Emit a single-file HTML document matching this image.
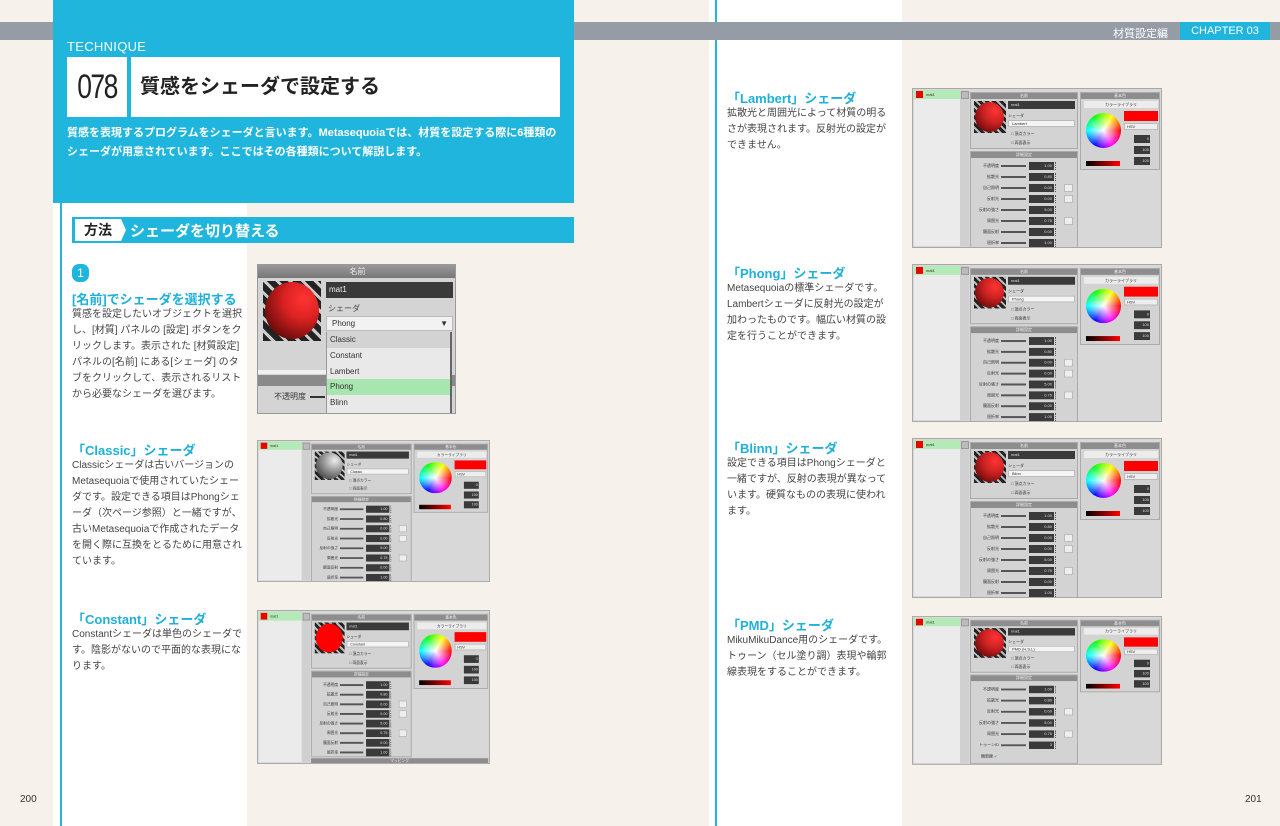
<!DOCTYPE html>
<html><head><meta charset="utf-8">
<style>
*{margin:0;padding:0;box-sizing:border-box}
body{width:1280px;height:826px;overflow:hidden;background:#f6f1eb;position:relative;font-family:"Liberation Sans","Noto Sans CJK JP",sans-serif;color:#333}
.a{position:absolute}
.band{left:0;top:22px;width:1280px;height:18px;background:#959ca6}
.hd{left:53px;top:0;width:521px;height:203px;background:#1fb5dd}
.wcol{background:#fff}
.bl{background:#27b3dd;width:2px}
h3{position:absolute;color:#1fb0da;font-size:13px;font-weight:bold;white-space:nowrap}
.tx{position:absolute;font-size:10px;line-height:16px;color:#444;width:171px;letter-spacing:0}
.tr{width:166px}
.p{position:absolute;width:250px;height:160px;background:#d8d8d8;border:1px solid #a8a8a8;transform-origin:0 0;overflow:hidden;font-size:4px;color:#333}
.p .ls{left:1px;top:1px;width:46px;height:156px;background:#ebebeb}
.p .sel{left:1px;top:1px;width:46px;height:9px;background:#b3eab7}
.p .sel:before{content:"";position:absolute;left:2px;top:1px;width:7px;height:7px;background:#e00}
.p .sel span{position:absolute;left:12px;top:2px;font-size:4px}
.p .sc{left:47px;top:1px;width:9px;height:156px;background:#d0d0d0}
.p .sc:before{content:"";position:absolute;left:1px;top:1px;width:6px;height:6px;background:#bbb;border:1px solid #999}
.p .sec{background:#d3d3d3;border:1px solid #aaa}
.p .sh{position:absolute;left:0;top:0;right:0;height:6px;background:#8d8d8d;color:#eee;text-align:center;font-size:4px;line-height:6px}
.p .sph{left:3px;top:8px;width:32px;height:32px;background:repeating-linear-gradient(45deg,#222 0 3px,#bbb 3px 5px)}
.p .sph i{position:absolute;left:1px;top:1px;width:29px;height:30px;border-radius:50%;background:radial-gradient(circle at 70% 30%,#f33 0,#c22 40%,#400 100%)}
.p .mt{left:37px;top:8px;width:67px;height:8px;background:#3a3a3a;color:#ddd;padding-left:3px;line-height:8px}
.p .sl{left:37px;top:20px}
.p .dd{left:37px;top:27px;width:67px;height:7px;background:#f4f4f4;border:1px solid #bbb;padding-left:3px;line-height:5px}
.p .ck{left:40px;top:38px}.p .ck2{left:40px;top:47px}
.p .rw{position:absolute;left:0;width:108px;height:10px}
.p .rw i{position:absolute;right:80px;top:2px;font-style:normal;white-space:nowrap}
.p .rw b{position:absolute;left:30px;top:4px;width:25px;height:1.5px;background:#555}
.p .rw em{position:absolute;left:58px;top:1px;width:25px;height:8px;background:#3a3a3a;color:#ddd;font-style:normal;text-align:right;padding-right:2px;line-height:8px}
.p .rw u{position:absolute;left:84px;top:1px;width:2px;height:8px;border-left:1px dotted #555}
.p .rw s{position:absolute;left:93px;top:1px;width:9px;height:8px;background:#eee;border:1px solid #bbb}
.p .wh{left:5px;top:20px;width:35px;height:35px;border-radius:50%;background:radial-gradient(circle,#fff 0,rgba(255,255,255,0) 70%),conic-gradient(from 90deg,#f00,#f0f,#00f,#0ff,#0f0,#ff0,#f00)}
.p .lib{left:3px;top:8px;width:74px;height:7px;background:#ececec;text-align:center;line-height:7px}
.p .red{left:43px;top:18px;width:34px;height:10px;background:#f00}
.p .hsv{left:43px;top:30px;width:34px;height:7px;background:#eee;border:1px solid #bbb;padding-left:2px;line-height:5px}
.p .nb{left:53px;width:16px;height:8px;background:#3a3a3a;color:#ddd;text-align:right;padding-right:1px;line-height:8px}
.p .gb{left:5px;top:68px;width:34px;height:5px;background:linear-gradient(90deg,#000,#f00)}
</style></head><body>

<div class="a wcol" style="left:53px;top:203px;width:194px;height:623px"></div>
<div class="a bl" style="left:60px;top:203px;height:623px"></div>
<div class="a wcol" style="left:709px;top:0;width:193px;height:826px"></div>
<div class="a bl" style="left:715px;top:0;height:826px"></div>
<div class="a band"></div>
<div class="a" style="left:1113px;top:25px;color:#fff;font-size:11px">材質設定編</div>
<div class="a" style="left:1180px;top:22px;width:90px;height:18px;background:#1fb5dd;color:#fff;font-size:11px;line-height:18px;text-align:center">CHAPTER 03</div>

<div class="a hd"></div>
<div class="a" style="left:67px;top:39px;color:#fff;font-size:13px;letter-spacing:0.3px">TECHNIQUE</div>
<div class="a" style="left:67px;top:57px;width:60px;height:60px;background:#fff"></div>
<div class="a" style="left:67px;top:57px;width:60px;height:60px;font-size:34px;line-height:60px;text-align:center;color:#222;letter-spacing:-2px;transform:scaleX(0.78)">078</div>
<div class="a" style="left:131px;top:57px;width:429px;height:60px;background:#fff;font-size:20px;font-weight:bold;line-height:60px;padding-left:9px;color:#222">質感をシェーダで設定する</div>
<div class="a" style="left:67px;top:124px;width:500px;color:#fff;font-size:11px;font-weight:bold;line-height:19px">質感を表現するプログラムをシェーダと言います。Metasequoiaでは、材質を設定する際に6種類のシェーダが用意されています。ここではその各種類について解説します。</div>

<div class="a" style="left:72px;top:217px;width:502px;height:26px;background:#1fb5dd"></div>
<div class="a" style="left:75px;top:219px;width:46px;height:22px;background:#fff;font-size:14px;font-weight:bold;line-height:22px;padding-left:9px;color:#222">方法</div>
<div class="a" style="left:121px;top:219px;width:0;height:0;border-top:11px solid transparent;border-bottom:11px solid transparent;border-left:5px solid #fff"></div>
<div class="a" style="left:130px;top:220px;color:#fff;font-size:15px;font-weight:bold">シェーダを切り替える</div>

<div class="a" style="left:72px;top:264px;width:17px;height:18px;border-radius:7px;background:#1fb5dd;color:#fff;font-size:12px;text-align:center;line-height:18px">1</div>
<h3 style="left:72px;top:289px">[名前]でシェーダを選択する</h3>
<div class="tx" style="left:72px;top:307px">質感を設定したいオブジェクトを選択し、[材質] パネルの [設定] ボタンをクリックします。表示された [材質設定] パネルの[名前] にある[シェーダ] のタブをクリックして、表示されるリストから必要なシェーダを選びます。</div>
<h3 style="left:72px;top:440px">「Classic」シェーダ</h3>
<div class="tx" style="left:72px;top:458px">Classicシェーダは古いバージョンのMetasequoiaで使用されていたシェーダです。設定できる項目はPhongシェーダ（次ページ参照）と一緒ですが、古いMetasequoiaで作成されたデータを開く際に互換をとるために用意されています。</div>
<h3 style="left:72px;top:609px">「Constant」シェーダ</h3>
<div class="tx" style="left:72px;top:627px">Constantシェーダは単色のシェーダです。陰影がないので平面的な表現になります。</div>

<h3 style="left:727px;top:88px">「Lambert」シェーダ</h3>
<div class="tx tr" style="left:727px;top:106px">拡散光と周囲光によって材質の明るさが表現されます。反射光の設定ができません。</div>
<h3 style="left:727px;top:263px">「Phong」シェーダ</h3>
<div class="tx tr" style="left:727px;top:281px">Metasequoiaの標準シェーダです。Lambertシェーダに反射光の設定が加わったものです。幅広い材質の設定を行うことができます。</div>
<h3 style="left:727px;top:438px">「Blinn」シェーダ</h3>
<div class="tx tr" style="left:727px;top:456px">設定できる項目はPhongシェーダと一緒ですが、反射の表現が異なっています。硬質なものの表現に使われます。</div>
<h3 style="left:727px;top:615px">「PMD」シェーダ</h3>
<div class="tx tr" style="left:727px;top:633px">MikuMikuDance用のシェーダです。トゥーン（セル塗り調）表現や輪郭線表現をすることができます。</div>

<div class="a" style="left:20px;top:794px;font-size:10px;color:#333">200</div>
<div class="a" style="left:1245px;top:794px;font-size:10px;color:#333">201</div>

<div class="a" style="left:257px;top:264px;width:199px;height:150px;background:#d4d4d4;border:1px solid #999;overflow:hidden;font-size:8px">
 <div class="a" style="left:0;top:0;width:199px;height:13px;background:linear-gradient(#999,#777);color:#eee;text-align:center;font-size:8px;line-height:13px">名前</div>
 <div class="a" style="left:5px;top:16px;width:58px;height:60px;background:repeating-linear-gradient(45deg,#222 0 6px,#ccc 6px 9px)"><i class="a" style="left:2px;top:1px;width:54px;height:57px;border-radius:50%;background:radial-gradient(circle at 72% 30%,#f33 0,#d22 35%,#300 100%)"></i></div>
 <div class="a" style="left:68px;top:17px;width:127px;height:16px;background:#3a3a3a;color:#eee;padding-left:3px;line-height:16px">mat1</div>
 <div class="a" style="left:70px;top:38px;color:#444">シェーダ</div>
 <div class="a" style="left:68px;top:51px;width:127px;height:15px;background:#f2f2f2;border:1px solid #bbb;padding-left:5px;line-height:13px">Phong<span style="position:absolute;right:4px">▼</span></div>
 <div class="a" style="left:0;top:105px;width:68px;height:4px;background:#f0f0f0"></div>
 <div class="a" style="left:0;top:110px;width:199px;height:11px;background:#8a8a8a"></div>
 <div class="a" style="left:16px;top:126px;color:#333">不透明度</div>
 <div class="a" style="left:52px;top:131px;width:15px;height:2px;background:#333"></div>
 <div class="a" style="left:68px;top:67px;width:126px;height:83px;background:#e9e9e9;border-left:1px solid #999;border-right:2px solid #666">
  <div style="height:16px;background:#d3d3d3;padding-left:3px;line-height:16px">Classic</div>
  <div style="height:16px;padding-left:3px;line-height:16px">Constant</div>
  <div style="height:15px;padding-left:3px;line-height:15px">Lambert</div>
  <div style="height:16px;background:#a8e6b0;padding-left:3px;line-height:16px">Phong</div>
  <div style="height:16px;padding-left:3px;line-height:16px">Blinn</div>
 </div>
</div>

<div class="p" style="left:257px;top:440px;transform:scale(0.932,0.8875)">
 <div class="a ls"></div><div class="a sel"><span>mat1</span></div><div class="a sc"></div>
 <div class="a sec" style="left:57px;top:3px;width:108px;height:57px"><div class="sh">名前</div>
  <div class="a sph"><i style="background:radial-gradient(circle at 70% 30%,#eee 0,#999 40%,#222 100%)"></i></div>
  <div class="a mt">mat1</div><div class="a sl">シェーダ</div><div class="a dd">Classic</div><div class="a ck">□ 頂点カラー</div><div class="a ck2">□ 両面表示</div></div>
 <div class="a sec" style="left:57px;top:62px;width:108px;height:97px"><div class="sh">詳細設定</div>
  <div class="rw" style="top:9px"><i>不透明度</i><b></b><em>1.00</em><u></u></div>
  <div class="rw" style="top:20px"><i>拡散光</i><b></b><em>0.80</em><u></u></div>
  <div class="rw" style="top:31px"><i>自己照明</i><b></b><em>0.00</em><u></u><s></s></div>
  <div class="rw" style="top:42px"><i>反射光</i><b></b><em>0.00</em><u></u><s></s></div>
  <div class="rw" style="top:53px"><i>反射の強さ</i><b></b><em>5.00</em><u></u></div>
  <div class="rw" style="top:64px"><i>周囲光</i><b></b><em>0.75</em><u></u><s></s></div>
  <div class="rw" style="top:75px"><i>鏡面反射</i><b></b><em>0.00</em><u></u></div>
  <div class="rw" style="top:86px"><i>屈折率</i><b></b><em>1.00</em><u></u></div></div>
 <div class="a sec" style="left:167px;top:3px;width:80px;height:78px"><div class="sh">基本色</div>
  <div class="a lib">カラーライブラリ</div><div class="a wh"></div><div class="a red"></div><div class="a hsv">HSV</div>
  <div class="a nb" style="top:42px">0</div><div class="a nb" style="top:53px">100</div><div class="a nb" style="top:64px">100</div><div class="a gb"></div></div>
</div>

<div class="p" style="left:257px;top:610px;transform:scale(0.932,0.9625)">
 <div class="a ls"></div><div class="a sel"><span>mat1</span></div><div class="a sc"></div>
 <div class="a sec" style="left:57px;top:3px;width:108px;height:57px"><div class="sh">名前</div>
  <div class="a sph"><i style="background:#f00"></i></div>
  <div class="a mt">mat1</div><div class="a sl">シェーダ</div><div class="a dd">Constant</div><div class="a ck">□ 頂点カラー</div><div class="a ck2">□ 両面表示</div></div>
 <div class="a sec" style="left:57px;top:62px;width:108px;height:90px"><div class="sh">詳細設定</div>
  <div class="rw" style="top:9px"><i>不透明度</i><b></b><em>1.00</em><u></u></div>
  <div class="rw" style="top:19px"><i>拡散光</i><b></b><em>0.80</em><u></u></div>
  <div class="rw" style="top:29px"><i>自己照明</i><b></b><em>0.00</em><u></u><s></s></div>
  <div class="rw" style="top:39px"><i>反射光</i><b></b><em>0.00</em><u></u><s></s></div>
  <div class="rw" style="top:49px"><i>反射の強さ</i><b></b><em>5.00</em><u></u></div>
  <div class="rw" style="top:59px"><i>周囲光</i><b></b><em>0.75</em><u></u><s></s></div>
  <div class="rw" style="top:69px"><i>鏡面反射</i><b></b><em>0.00</em><u></u></div>
  <div class="rw" style="top:79px"><i>屈折率</i><b></b><em>1.00</em><u></u></div></div>
 <div class="a" style="left:57px;top:153px;width:190px;height:6px;background:#8d8d8d;color:#eee;text-align:center;line-height:6px">マッピング</div>
 <div class="a sec" style="left:167px;top:3px;width:80px;height:78px"><div class="sh">基本色</div>
  <div class="a lib">カラーライブラリ</div><div class="a wh"></div><div class="a red"></div><div class="a hsv">HSV</div>
  <div class="a nb" style="top:42px">0</div><div class="a nb" style="top:53px">100</div><div class="a nb" style="top:64px">100</div><div class="a gb"></div></div>
</div>

<div class="p" style="left:912px;top:88px">
 <div class="a ls"></div><div class="a sel"><span>mat1</span></div><div class="a sc"></div>
 <div class="a sec" style="left:57px;top:3px;width:108px;height:57px"><div class="sh">名前</div>
  <div class="a sph"><i></i></div>
  <div class="a mt">mat1</div><div class="a sl">シェーダ</div><div class="a dd">Lambert</div><div class="a ck">□ 頂点カラー</div><div class="a ck2">□ 両面表示</div></div>
 <div class="a sec" style="left:57px;top:62px;width:108px;height:97px"><div class="sh">詳細設定</div>
  <div class="rw" style="top:9px"><i>不透明度</i><b></b><em>1.00</em><u></u></div>
  <div class="rw" style="top:20px"><i>拡散光</i><b></b><em>0.80</em><u></u></div>
  <div class="rw" style="top:31px"><i>自己照明</i><b></b><em>0.00</em><u></u><s></s></div>
  <div class="rw" style="top:42px"><i>反射光</i><b></b><em>0.00</em><u></u><s></s></div>
  <div class="rw" style="top:53px"><i>反射の強さ</i><b></b><em>5.00</em><u></u></div>
  <div class="rw" style="top:64px"><i>周囲光</i><b></b><em>0.75</em><u></u><s></s></div>
  <div class="rw" style="top:75px"><i>鏡面反射</i><b></b><em>0.00</em><u></u></div>
  <div class="rw" style="top:86px"><i>屈折率</i><b></b><em>1.00</em><u></u></div></div>
 <div class="a sec" style="left:167px;top:3px;width:80px;height:78px"><div class="sh">基本色</div>
  <div class="a lib">カラーライブラリ</div><div class="a wh"></div><div class="a red"></div><div class="a hsv">HSV</div>
  <div class="a nb" style="top:42px">0</div><div class="a nb" style="top:53px">100</div><div class="a nb" style="top:64px">100</div><div class="a gb"></div></div>
</div>

<div class="p" style="left:912px;top:264px;transform:scale(1,0.9875)">
 <div class="a ls"></div><div class="a sel"><span>mat1</span></div><div class="a sc"></div>
 <div class="a sec" style="left:57px;top:3px;width:108px;height:57px"><div class="sh">名前</div>
  <div class="a sph"><i></i></div>
  <div class="a mt">mat1</div><div class="a sl">シェーダ</div><div class="a dd">Phong</div><div class="a ck">□ 頂点カラー</div><div class="a ck2">□ 両面表示</div></div>
 <div class="a sec" style="left:57px;top:62px;width:108px;height:97px"><div class="sh">詳細設定</div>
  <div class="rw" style="top:9px"><i>不透明度</i><b></b><em>1.00</em><u></u></div>
  <div class="rw" style="top:20px"><i>拡散光</i><b></b><em>0.80</em><u></u></div>
  <div class="rw" style="top:31px"><i>自己照明</i><b></b><em>0.00</em><u></u><s></s></div>
  <div class="rw" style="top:42px"><i>反射光</i><b></b><em>0.00</em><u></u><s></s></div>
  <div class="rw" style="top:53px"><i>反射の強さ</i><b></b><em>5.00</em><u></u></div>
  <div class="rw" style="top:64px"><i>周囲光</i><b></b><em>0.75</em><u></u><s></s></div>
  <div class="rw" style="top:75px"><i>鏡面反射</i><b></b><em>0.00</em><u></u></div>
  <div class="rw" style="top:86px"><i>屈折率</i><b></b><em>1.00</em><u></u></div></div>
 <div class="a sec" style="left:167px;top:3px;width:80px;height:78px"><div class="sh">基本色</div>
  <div class="a lib">カラーライブラリ</div><div class="a wh"></div><div class="a red"></div><div class="a hsv">HSV</div>
  <div class="a nb" style="top:42px">0</div><div class="a nb" style="top:53px">100</div><div class="a nb" style="top:64px">100</div><div class="a gb"></div></div>
</div>

<div class="p" style="left:912px;top:438px">
 <div class="a ls"></div><div class="a sel"><span>mat1</span></div><div class="a sc"></div>
 <div class="a sec" style="left:57px;top:3px;width:108px;height:57px"><div class="sh">名前</div>
  <div class="a sph"><i></i></div>
  <div class="a mt">mat1</div><div class="a sl">シェーダ</div><div class="a dd">Blinn</div><div class="a ck">□ 頂点カラー</div><div class="a ck2">□ 両面表示</div></div>
 <div class="a sec" style="left:57px;top:62px;width:108px;height:97px"><div class="sh">詳細設定</div>
  <div class="rw" style="top:9px"><i>不透明度</i><b></b><em>1.00</em><u></u></div>
  <div class="rw" style="top:20px"><i>拡散光</i><b></b><em>0.80</em><u></u></div>
  <div class="rw" style="top:31px"><i>自己照明</i><b></b><em>0.00</em><u></u><s></s></div>
  <div class="rw" style="top:42px"><i>反射光</i><b></b><em>0.00</em><u></u><s></s></div>
  <div class="rw" style="top:53px"><i>反射の強さ</i><b></b><em>5.00</em><u></u></div>
  <div class="rw" style="top:64px"><i>周囲光</i><b></b><em>0.75</em><u></u><s></s></div>
  <div class="rw" style="top:75px"><i>鏡面反射</i><b></b><em>0.00</em><u></u></div>
  <div class="rw" style="top:86px"><i>屈折率</i><b></b><em>1.00</em><u></u></div></div>
 <div class="a sec" style="left:167px;top:3px;width:80px;height:78px"><div class="sh">基本色</div>
  <div class="a lib">カラーライブラリ</div><div class="a wh"></div><div class="a red"></div><div class="a hsv">HSV</div>
  <div class="a nb" style="top:42px">0</div><div class="a nb" style="top:53px">100</div><div class="a nb" style="top:64px">100</div><div class="a gb"></div></div>
</div>

<div class="p" style="left:912px;top:616px;transform:scale(1,0.93)">
 <div class="a ls"></div><div class="a sel"><span>mat1</span></div><div class="a sc"></div>
 <div class="a sec" style="left:57px;top:3px;width:108px;height:57px"><div class="sh">名前</div>
  <div class="a sph"><i></i></div>
  <div class="a mt">mat1</div><div class="a sl">シェーダ</div><div class="a dd">PMD (H,S,L)</div><div class="a ck">□ 頂点カラー</div><div class="a ck2">□ 両面表示</div></div>
 <div class="a sec" style="left:57px;top:62px;width:108px;height:96px"><div class="sh">詳細設定</div>
  <div class="rw" style="top:10px"><i>不透明度</i><b></b><em>1.00</em><u></u></div>
  <div class="rw" style="top:22px"><i>拡散光</i><b></b><em>0.80</em><u></u></div>
  <div class="rw" style="top:34px"><i>反射光</i><b></b><em>0.00</em><u></u><s></s></div>
  <div class="rw" style="top:46px"><i>反射の強さ</i><b></b><em>5.00</em><u></u></div>
  <div class="rw" style="top:58px"><i>周囲光</i><b></b><em>0.75</em><u></u><s></s></div>
  <div class="rw" style="top:70px"><i>トゥーンID</i><b></b><em>3</em><u></u></div>
  <div class="a" style="left:10px;top:84px">輪郭線 <span style="color:#2a2">✔</span></div></div>
 <div class="a sec" style="left:167px;top:3px;width:80px;height:78px"><div class="sh">基本色</div>
  <div class="a lib">カラーライブラリ</div><div class="a wh"></div><div class="a red"></div><div class="a hsv">HSV</div>
  <div class="a nb" style="top:42px">0</div><div class="a nb" style="top:53px">100</div><div class="a nb" style="top:64px">100</div><div class="a gb"></div></div>
</div>

</body></html>
